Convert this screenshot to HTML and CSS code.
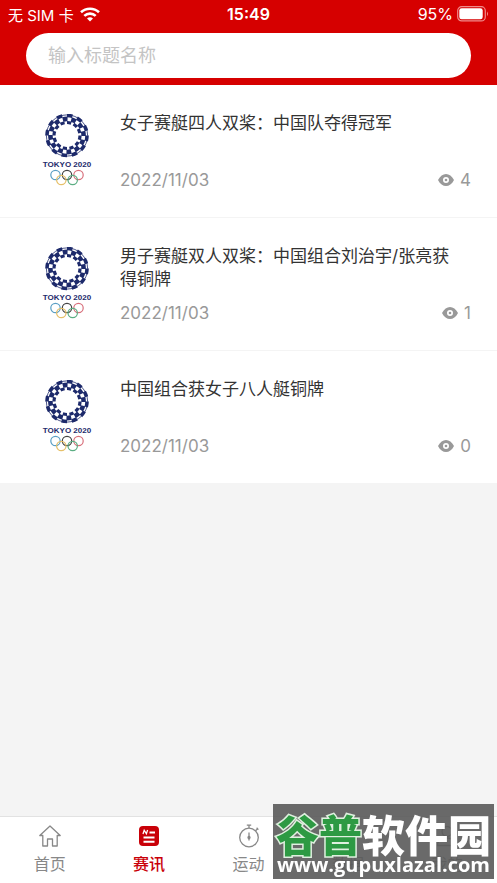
FILE: index.html
```html
<!DOCTYPE html>
<html lang="zh-CN">
  <head>
    <meta charset="UTF-8" />
    <meta name="viewport" content="width=device-width, initial-scale=1.0" />
    <title>赛讯</title>
    <link rel="stylesheet" href="styles.css">
  </head>
  <body>
    <svg class="sprite" aria-hidden="true">
      <symbol id="emblem" viewBox="0 0 50 74">
        <g fill="none" stroke="#1d2a6b">
          <circle cx="25" cy="21.5" r="20" stroke-width="3.6" pathLength="72" stroke-dasharray="3.2 2.8" />
          <circle cx="25" cy="21.5" r="16.6" stroke-width="4.6" pathLength="72" stroke-dasharray="3.4 2.6" stroke-dashoffset="3" />
          <circle cx="25" cy="21.5" r="13" stroke-width="3.2" pathLength="72" stroke-dasharray="3.8 2.2" />
          <circle cx="25" cy="21.5" r="20.6" stroke-width="0.8" />
        </g>
        <text x="25" y="53" text-anchor="middle" class="emblem-text">TOKYO 2020</text>
        <g fill="none" stroke-width="1.2">
          <circle cx="13.5" cy="61" r="4.7" stroke="#5a9fc4" />
          <circle cx="25" cy="61" r="4.7" stroke="#444" />
          <circle cx="36.5" cy="61" r="4.7" stroke="#d8707c" />
          <circle cx="19.3" cy="66" r="4.7" stroke="#e6c069" />
          <circle cx="30.7" cy="66" r="4.7" stroke="#5cae83" />
        </g>
      </symbol>
      <symbol id="eye" viewBox="0 0 16 12">
        <path fill="#999" fill-rule="evenodd" d="M0 6C2 2 5 0 8 0s6 2 8 6c-2 4-5 6-8 6S2 10 0 6zM8 3a3 3 0 1 0 0 6 3 3 0 0 0 0-6z" />
        <circle cx="8" cy="6" r="1.3" fill="#999" />
      </symbol>
    </svg>

    <header class="header">
      <div class="status">
        <div class="carrier">
          <span>无 SIM 卡</span>
          <svg width="20" height="15" viewBox="0 0 20 15" fill="none" stroke="#fff" stroke-width="2.6">
            <path d="M1 5.3a13 13 0 0 1 18 0" />
            <path d="M4.3 8.9a8.2 8.2 0 0 1 11.4 0" />
            <path d="M10 14.6l-3-3a4.4 4.4 0 0 1 6 0z" fill="#fff" stroke="none" />
          </svg>
        </div>
        <span class="time">15:49</span>
        <div class="battery">
          <span>95%</span>
          <svg width="32" height="16" viewBox="0 0 32 16">
            <rect x="0.7" y="0.7" width="27.6" height="14.2" rx="4" fill="none" stroke="#f08a8a" stroke-width="1.2" />
            <rect x="2.3" y="2.3" width="23.4" height="11" rx="2.3" fill="#fff" />
            <path d="M30 5.5q2 2.4 0 4.8z" fill="#f08a8a" />
          </svg>
        </div>
      </div>
      <input class="search" type="text" placeholder="输入标题名称" aria-label="输入标题名称" />
    </header>

    <main class="list">
      <article class="item">
        <svg class="thumb"><use href="#emblem" /></svg>
        <div class="info">
          <a class="title" href="#">女子赛艇四人双桨：中国队夺得冠军</a>
          <div class="meta">
            <span>2022/11/03</span>
            <span class="views"><svg class="eye"><use href="#eye" /></svg>4</span>
          </div>
        </div>
      </article>
      <article class="item">
        <svg class="thumb"><use href="#emblem" /></svg>
        <div class="info">
          <a class="title" href="#">男子赛艇双人双桨：中国组合刘治宇/张亮获得铜牌</a>
          <div class="meta">
            <span>2022/11/03</span>
            <span class="views"><svg class="eye"><use href="#eye" /></svg>1</span>
          </div>
        </div>
      </article>
      <article class="item">
        <svg class="thumb"><use href="#emblem" /></svg>
        <div class="info">
          <a class="title" href="#">中国组合获女子八人艇铜牌</a>
          <div class="meta">
            <span>2022/11/03</span>
            <span class="views"><svg class="eye"><use href="#eye" /></svg>0</span>
          </div>
        </div>
      </article>
    </main>

    <nav class="tabs">
      <a class="tab" href="#">
        <svg class="icon" viewBox="0 0 24 24" fill="none" stroke="currentColor" stroke-width="1.3" stroke-linejoin="round">
          <path d="M12 2L1.8 11.5h3V22h4.7v-7h5v7h4.7V11.5h3z" />
        </svg>
        <span>首页</span>
      </a>
      <a class="tab active" href="#">
        <svg class="icon" viewBox="0 0 24 24">
          <rect x="2" y="2" width="20" height="20" rx="4" fill="currentColor" />
          <path d="M6 10l1.2-3.8 2.2 3.6 1.2-3.8" fill="none" stroke="#fff" stroke-width="1.3" />
          <path d="M12.5 8.6h5.5M6.5 13.5h11M6.5 17.8h11" fill="none" stroke="#fff" stroke-width="2" />
        </svg>
        <span>赛讯</span>
      </a>
      <a class="tab" href="#">
        <svg class="icon" viewBox="0 0 24 24" fill="none" stroke="currentColor" stroke-width="1.3">
          <circle cx="12" cy="13.5" r="9.3" />
          <path d="M12 1v3M9.8 1.2h4.4M18.6 6.8l2.2-2.2M19.6 3.8l1.8 1.8M12 8.5v8" />
          <circle cx="12" cy="13.5" r="1" fill="currentColor" />
        </svg>
        <span>运动</span>
      </a>
      <a class="tab" href="#">
        <svg class="icon" viewBox="0 0 24 24" fill="none" stroke="currentColor" stroke-width="1.3">
          <circle cx="12" cy="12" r="9.5" />
          <path d="M12 2.5V12h9.5" />
        </svg>
        <span>数据</span>
      </a>
      <a class="tab" href="#">
        <svg class="icon" viewBox="0 0 24 24" fill="none" stroke="currentColor" stroke-width="1.3">
          <circle cx="12" cy="7.5" r="5" />
          <path d="M2.5 21.5c0-5 4-7.5 9.5-7.5s9.5 2.5 9.5 7.5z" />
        </svg>
        <span>我的</span>
      </a>
    </nav>

    <div class="watermark">
      <div class="brand"><span class="green">谷普</span>软件园</div>
      <div class="site">www.gupuxlazal.com</div>
    </div>
  </body>
</html>
```

FILE: styles.css
```css
* {
  box-sizing: border-box;
}
body {
  margin: 0;
  min-height: 100vh;
  display: flex;
  flex-direction: column;
  background: #f4f4f4;
  font-family: Inter, "Noto Sans CJK SC", sans-serif;
}
a {
  color: inherit;
  text-decoration: none;
}
.sprite {
  display: none;
}
.header {
  background: #d60000;
  padding: 0 26px 7px;
}
.status {
  display: grid;
  grid-template-columns: 1fr auto 1fr;
  align-items: center;
  height: 28px;
  margin: 0 -18px 5px;
  color: #fff;
  font-size: 16px;
}
.carrier,
.battery {
  display: flex;
  align-items: center;
  gap: 6px;
}
.carrier {
  font-size: 15px;
}
.battery {
  justify-content: flex-end;
  gap: 4px;
}
.time {
  font-weight: 600;
}
.search {
  display: block;
  width: 100%;
  height: 45px;
  border: 0;
  border-radius: 23px;
  padding: 0 22px;
  background: #fff;
  font-family: inherit;
  font-size: 18px;
  outline: none;
}
.search::placeholder {
  color: #c4c4c4;
}
.list {
  flex: 1;
}
.item {
  display: flex;
  gap: 28px;
  padding: 27px 26px 26px 42px;
  border-bottom: 1px solid #f4f4f4;
  background: #fff;
}
.thumb {
  width: 50px;
  height: 74px;
  margin-top: 2px;
}
.emblem-text {
  font-family: "Liberation Sans", sans-serif;
  font-size: 8px;
  font-weight: 700;
  fill: #1d2a6b;
}
.info {
  flex: 1;
  min-height: 79px;
  display: flex;
  flex-direction: column;
  justify-content: space-between;
}
.title {
  padding-right: 14px;
  color: #333;
  font-size: 17px;
  line-height: 23px;
}
.meta {
  display: flex;
  justify-content: space-between;
  align-items: center;
  color: #999;
  font-size: 17px;
  line-height: 22px;
}
.views {
  display: flex;
  align-items: center;
  gap: 6px;
}
.eye {
  width: 16px;
  height: 12px;
}
.tabs {
  display: flex;
  height: 67px;
  border-top: 1px solid #e2e2e2;
  background: #fff;
}
.tab {
  flex: 1;
  display: flex;
  flex-direction: column;
  align-items: center;
  gap: 4px;
  padding-top: 7px;
  color: #888;
  font-size: 16px;
  line-height: 24px;
}
.tab.active {
  color: #c90008;
  font-weight: 500;
}
.icon {
  width: 24px;
  height: 24px;
}
.watermark {
  position: fixed;
  right: 3px;
  bottom: 4px;
  width: 221px;
  height: 75px;
  padding-top: 8px;
  background: rgba(90, 90, 90, 0.9);
  color: #fff;
  text-align: center;
  white-space: nowrap;
}
.brand {
  font-family: "Noto Sans CJK SC", sans-serif;
  font-size: 43px;
  font-weight: 900;
  line-height: 42px;
}
.green {
  color: #2d9a43;
  -webkit-text-stroke: 3px #dff0df;
  paint-order: stroke fill;
}
.site {
  font-family: "Open Sans", sans-serif;
  font-size: 20px;
  font-weight: 700;
  line-height: 22px;
}
```
